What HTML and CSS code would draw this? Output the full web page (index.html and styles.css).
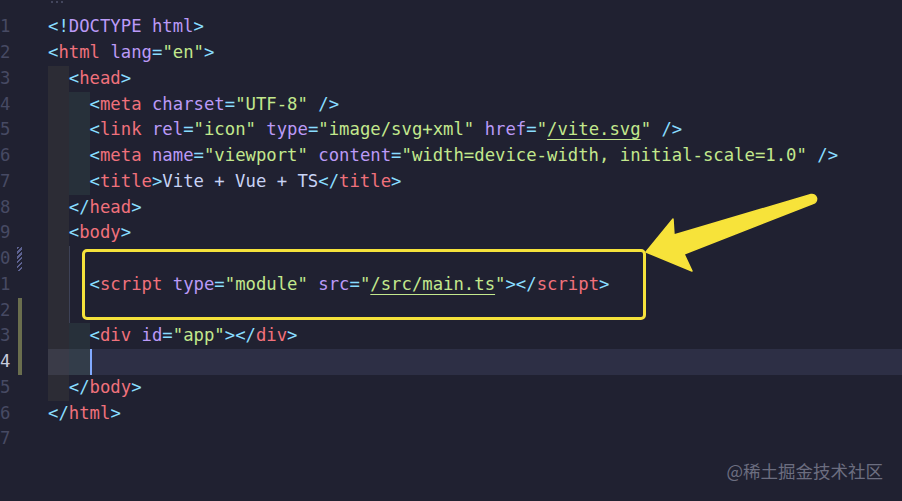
FILE: index.html
```html
<!DOCTYPE html>
<html lang="en">
<head>
  <meta charset="UTF-8">
  <meta name="viewport" content="width=device-width, initial-scale=1.0">
  <title>index.html</title>
  <link rel="stylesheet" href="styles.css">
</head>
<body>
  <div class="editor">
    <div class="fold"><i></i><i></i><i></i></div>

    <div class="line">
      <span class="ln">1</span><span class="gutter"></span>
      <span class="code"><span class="p">&lt;!</span><span class="a">DOCTYPE html</span><span class="p">&gt;</span></span>
    </div>
    <div class="line">
      <span class="ln">2</span><span class="gutter"></span>
      <span class="code"><span class="p">&lt;</span><span class="t">html</span> <span class="a">lang</span><span class="p">=</span><span class="s">"en"</span><span class="p">&gt;</span></span>
    </div>
    <div class="line">
      <span class="ln">3</span><span class="gutter"></span>
      <span class="code"><span class="ind l1"></span><span class="p">&lt;</span><span class="t">head</span><span class="p">&gt;</span></span>
    </div>
    <div class="line">
      <span class="ln">4</span><span class="gutter"></span>
      <span class="code"><span class="ind l1"></span><span class="ind l2"></span><span class="p">&lt;</span><span class="t">meta</span> <span class="a">charset</span><span class="p">=</span><span class="s">"UTF-8"</span> <span class="p">/&gt;</span></span>
    </div>
    <div class="line">
      <span class="ln">5</span><span class="gutter"></span>
      <span class="code"><span class="ind l1"></span><span class="ind l2"></span><span class="p">&lt;</span><span class="t">link</span> <span class="a">rel</span><span class="p">=</span><span class="s">"icon"</span> <span class="a">type</span><span class="p">=</span><span class="s">"image/svg+xml"</span> <span class="a">href</span><span class="p">=</span><span class="s">"<u>/vite.svg</u>"</span> <span class="p">/&gt;</span></span>
    </div>
    <div class="line">
      <span class="ln">6</span><span class="gutter"></span>
      <span class="code"><span class="ind l1"></span><span class="ind l2"></span><span class="p">&lt;</span><span class="t">meta</span> <span class="a">name</span><span class="p">=</span><span class="s">"viewport"</span> <span class="a">content</span><span class="p">=</span><span class="s">"width=device-width, initial-scale=1.0"</span> <span class="p">/&gt;</span></span>
    </div>
    <div class="line">
      <span class="ln">7</span><span class="gutter"></span>
      <span class="code"><span class="ind l1"></span><span class="ind l2"></span><span class="p">&lt;</span><span class="t">title</span><span class="p">&gt;</span>Vite + Vue + TS<span class="p">&lt;/</span><span class="t">title</span><span class="p">&gt;</span></span>
    </div>
    <div class="line">
      <span class="ln">8</span><span class="gutter"></span>
      <span class="code"><span class="ind l1"></span><span class="p">&lt;/</span><span class="t">head</span><span class="p">&gt;</span></span>
    </div>
    <div class="line">
      <span class="ln">9</span><span class="gutter"></span>
      <span class="code"><span class="ind l1"></span><span class="p">&lt;</span><span class="t">body</span><span class="p">&gt;</span></span>
    </div>
    <div class="line">
      <span class="ln">10</span><span class="gutter"><span class="mark hatch"></span></span>
      <span class="code"><span class="ind l1"></span><span class="ind guide"></span></span>
    </div>
    <div class="line">
      <span class="ln">11</span><span class="gutter"></span>
      <span class="code"><span class="ind l1"></span><span class="ind guide"></span><span class="p">&lt;</span><span class="t">script</span> <span class="a">type</span><span class="p">=</span><span class="s">"module"</span> <span class="a">src</span><span class="p">=</span><span class="s">"<u>/src/main.ts</u>"</span><span class="p">&gt;&lt;/</span><span class="t">script</span><span class="p">&gt;</span></span>
    </div>
    <div class="line">
      <span class="ln">12</span><span class="gutter"><span class="mark added"></span></span>
      <span class="code"><span class="ind l1"></span><span class="ind guide"></span></span>
    </div>
    <div class="line">
      <span class="ln">13</span><span class="gutter"><span class="mark added"></span></span>
      <span class="code"><span class="ind l1"></span><span class="ind l2"></span><span class="p">&lt;</span><span class="t">div</span> <span class="a">id</span><span class="p">=</span><span class="s">"app"</span><span class="p">&gt;&lt;/</span><span class="t">div</span><span class="p">&gt;</span></span>
    </div>
    <div class="line current">
      <span class="ln">14</span><span class="gutter"><span class="mark added"></span></span>
      <span class="code"><span class="ind l1"></span><span class="ind l2"></span><span class="cursor"></span></span>
    </div>
    <div class="line">
      <span class="ln">15</span><span class="gutter"></span>
      <span class="code"><span class="ind l1"></span><span class="p">&lt;/</span><span class="t">body</span><span class="p">&gt;</span></span>
    </div>
    <div class="line">
      <span class="ln">16</span><span class="gutter"></span>
      <span class="code"><span class="p">&lt;/</span><span class="t">html</span><span class="p">&gt;</span></span>
    </div>
    <div class="line">
      <span class="ln">17</span><span class="gutter"></span>
      <span class="code"></span>
    </div>

    <!-- 标注：黄框 + 箭头 -->
    <div class="callout"></div>
    <svg class="arrow" width="902" height="501" viewBox="0 0 902 501">
      <path d="M 646 252 L 673 219 L 674 235 L 811 194.5 A 4.5 4.5 0 0 1 813 203.5 L 684 254 L 692 271 Z"
            fill="#f7e33a" stroke="#f7e33a" stroke-width="1.5" stroke-linejoin="round"/>
    </svg>

    <div class="watermark">@稀土掘金技术社区</div>
  </div>
</body>
</html>
```

FILE: styles.css
```css
    body {
      margin: 0;
      padding: 0;
      overflow: hidden;
      background-color: #202131;
    }
    .editor {
      position: relative;
      width: 902px;
      height: 501px;
      overflow: hidden;
      background-color: #202131;
      color: #c8d3f5;
      font-family: "DejaVu Sans Mono", "Liberation Mono", monospace;
      font-size: 17.27px;
      line-height: 25.75px;
    }
    .fold {
      height: 14.4px;
      padding-left: 51px;
      display: flex;
      gap: 3px;
      align-items: flex-start;
      padding-top: 1px;
      box-sizing: border-box;
    }
    .fold i {
      width: 2px;
      height: 2px;
      border-radius: 50%;
      background-color: #4f536c;
    }
    .line {
      display: flex;
      height: 25.75px;
    }
    .ln {
      width: 2ch;
      margin-left: -1ch;
      text-align: right;
      color: #474a63;
      flex: none;
    }
    .current .ln {
      color: #c8cbdc;
    }
    .gutter {
      width: 37.6px;
      padding-left: 7.6px;
      box-sizing: border-box;
      flex: none;
      display: flex;
    }
    .mark {
      width: 4px;
      height: 100%;
    }
    .mark.added {
      background-color: #6a6e4e;
    }
    .mark.hatch {
      width: 5px;
      margin-left: -1px;
      height: 24px;
      margin-top: 1px;
      background: repeating-linear-gradient(135deg, #5c6190 0 1.5px, transparent 1.5px 3.5px);
    }
    .code {
      flex: 1;
      display: block;
      white-space: pre;
      height: 25.75px;
    }
    .current .code {
      background-color: #2d2f45;
    }
    .ind {
      display: inline-block;
      vertical-align: top;
      width: 2ch;
      height: 25.75px;
    }
    .ind.l1 {
      background-color: #2c2c35;
    }
    .ind.l2 {
      background-color: #27303a;
    }
    .ind.guide {
      border-left: 1px solid #3d4257;
      box-sizing: border-box;
    }
    .current .ind.l1 {
      background-color: #3a3b48;
    }
    .current .ind.l2 {
      background-color: #333d4a;
    }
    .cursor {
      display: inline-block;
      vertical-align: top;
      width: 2px;
      height: 25.75px;
      background-color: #82aaff;
    }

    /* token colours */
    .p { color: #89ddff; }
    .t { color: #f0717c; }
    .a { color: #bb9af7; }
    .s { color: #c3e88d; }
    .s u {
      text-decoration-color: #c3e88d;
      text-underline-offset: 4px;
    }

    .callout {
      position: absolute;
      left: 82px;
      top: 248.5px;
      width: 564px;
      height: 71px;
      box-sizing: border-box;
      border: 3px solid #f5e23b;
      border-radius: 5px;
    }
    .arrow {
      position: absolute;
      left: 0;
      top: 0;
      pointer-events: none;
    }
    .watermark {
      position: absolute;
      right: 19px;
      bottom: 19px;
      font-family: "Noto Sans CJK SC", "Noto Sans", sans-serif;
      font-size: 17.5px;
      line-height: 22px;
      color: #6c6e80;
    }
```
